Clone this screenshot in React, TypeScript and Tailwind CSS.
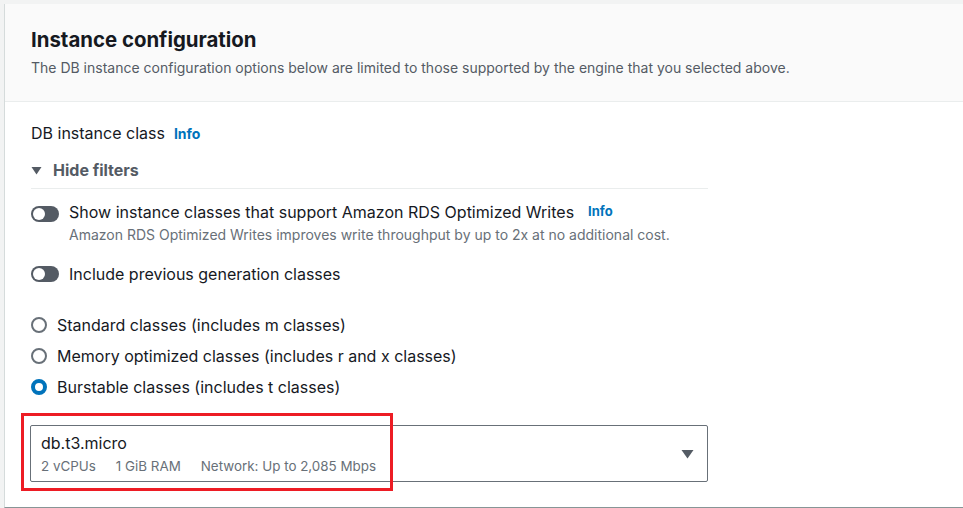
import { useState } from 'react';

function Toggle() {
    return (
        <span className="relative inline-block w-[28px] h-[16px] rounded-full bg-[#545b64] shrink-0">
            <span className="absolute left-[2px] top-[2px] w-[12px] h-[12px] rounded-full bg-white"></span>
        </span>
    );
}

function Radio({ checked }: { checked?: boolean }) {
    if (checked) {
        return <span className="inline-block w-[16px] h-[16px] rounded-full border-[4px] border-[#0073bb] bg-white shrink-0"></span>;
    }
    return <span className="inline-block w-[16px] h-[16px] rounded-full border-[2px] border-[#687078] bg-white shrink-0"></span>;
}

export default function App() {
    const [cls] = useState('burstable');
    const options = [
        { id: 'standard', label: 'Standard classes (includes m classes)' },
        { id: 'memory', label: 'Memory optimized classes (includes r and x classes)' },
        { id: 'burstable', label: 'Burstable classes (includes t classes)' },
    ];

    return (
        <div className="min-h-screen bg-[#f2f3f3] pt-[4px] pl-[4px] overflow-hidden font-['Inter',sans-serif] text-[#16191f]">
            <div className="w-[980px] bg-white border-l border-[#d5dbdb] border-b border-b-[#879596]">
                <div className="bg-[#fafafa] border-b border-[#eaeded] pl-[26px] pt-[23px] pb-[23px]">
                    <h2 className="text-[20.4px] leading-[26px] font-bold">Instance configuration</h2>
                    <p className="text-[14px] leading-[20px] text-[#545b64] mt-[5px]">
                        The DB instance configuration options below are limited to those supported by the engine that you selected above.
                    </p>
                </div>

                <div className="pl-[26px] pt-[20px] pb-[25px] w-[703px]">
                    <div className="flex items-center gap-[9px] h-[22px]">
                        <span className="text-[16px]">DB instance class</span>
                        <span className="text-[14px] font-bold text-[#0073bb]">Info</span>
                    </div>

                    <div className="flex items-center gap-[11px] mt-[15px] h-[22px] text-[#545b64]">
                        <svg width="11" height="9" viewBox="0 0 11 9" className="shrink-0">
                            <path d="M0.5 1 L10.5 1 L5.5 8.5 Z" fill="#545b64" />
                        </svg>
                        <span className="text-[16px] font-bold">Hide filters</span>
                    </div>

                    <div className="border-t border-[#eaeded] mt-[7px]"></div>

                    <div className="flex items-start gap-[10px] mt-[12px]">
                        <div className="pt-[3px]"><Toggle /></div>
                        <div>
                            <div className="flex items-center gap-[14px] h-[22px]">
                                <span className="text-[16px]">Show instance classes that support Amazon RDS Optimized Writes</span>
                                <span className="text-[13px] font-bold text-[#0073bb]">Info</span>
                            </div>
                            <div className="text-[14px] leading-[18px] text-[#687078] mt-[3px]">
                                Amazon RDS Optimized Writes improves write throughput by up to 2x at no additional cost.
                            </div>
                        </div>
                    </div>

                    <div className="flex items-center gap-[10px] mt-[19px] h-[22px]">
                        <Toggle />
                        <span className="text-[16px]">Include previous generation classes</span>
                    </div>

                    <div className="flex flex-col gap-[9px] mt-[29px]">
                        {options.map((o) => (
                            <div key={o.id} className="flex items-center gap-[10px] h-[22px]">
                                <Radio checked={cls === o.id} />
                                <span className="text-[16px]">{o.label}</span>
                            </div>
                        ))}
                    </div>

                    <div className="relative mt-[27px]">
                        <div className="flex items-center justify-between border border-[#687078] rounded-[2px] pl-[10px] pr-[13px] h-[57px] -ml-px">
                            <div>
                                <div className="text-[16px] leading-[20px]">db.t3.micro</div>
                                <div className="flex gap-[20px] text-[13.4px] leading-[18px] text-[#687078] mt-[4px]">
                                    <span>2 vCPUs</span>
                                    <span>1 GiB RAM</span>
                                    <span>Network: Up to 2,085 Mbps</span>
                                </div>
                            </div>
                            <svg width="13" height="10" viewBox="0 0 13 10">
                                <path d="M0.5 1 L12.5 1 L6.5 9.5 Z" fill="#545b64" />
                            </svg>
                        </div>
                        <div className="absolute left-[-10px] top-[-12px] w-[372px] h-[78px] border-[3px] border-[#ed1c24] pointer-events-none"></div>
                    </div>
                </div>
            </div>
        </div>
    );
}
